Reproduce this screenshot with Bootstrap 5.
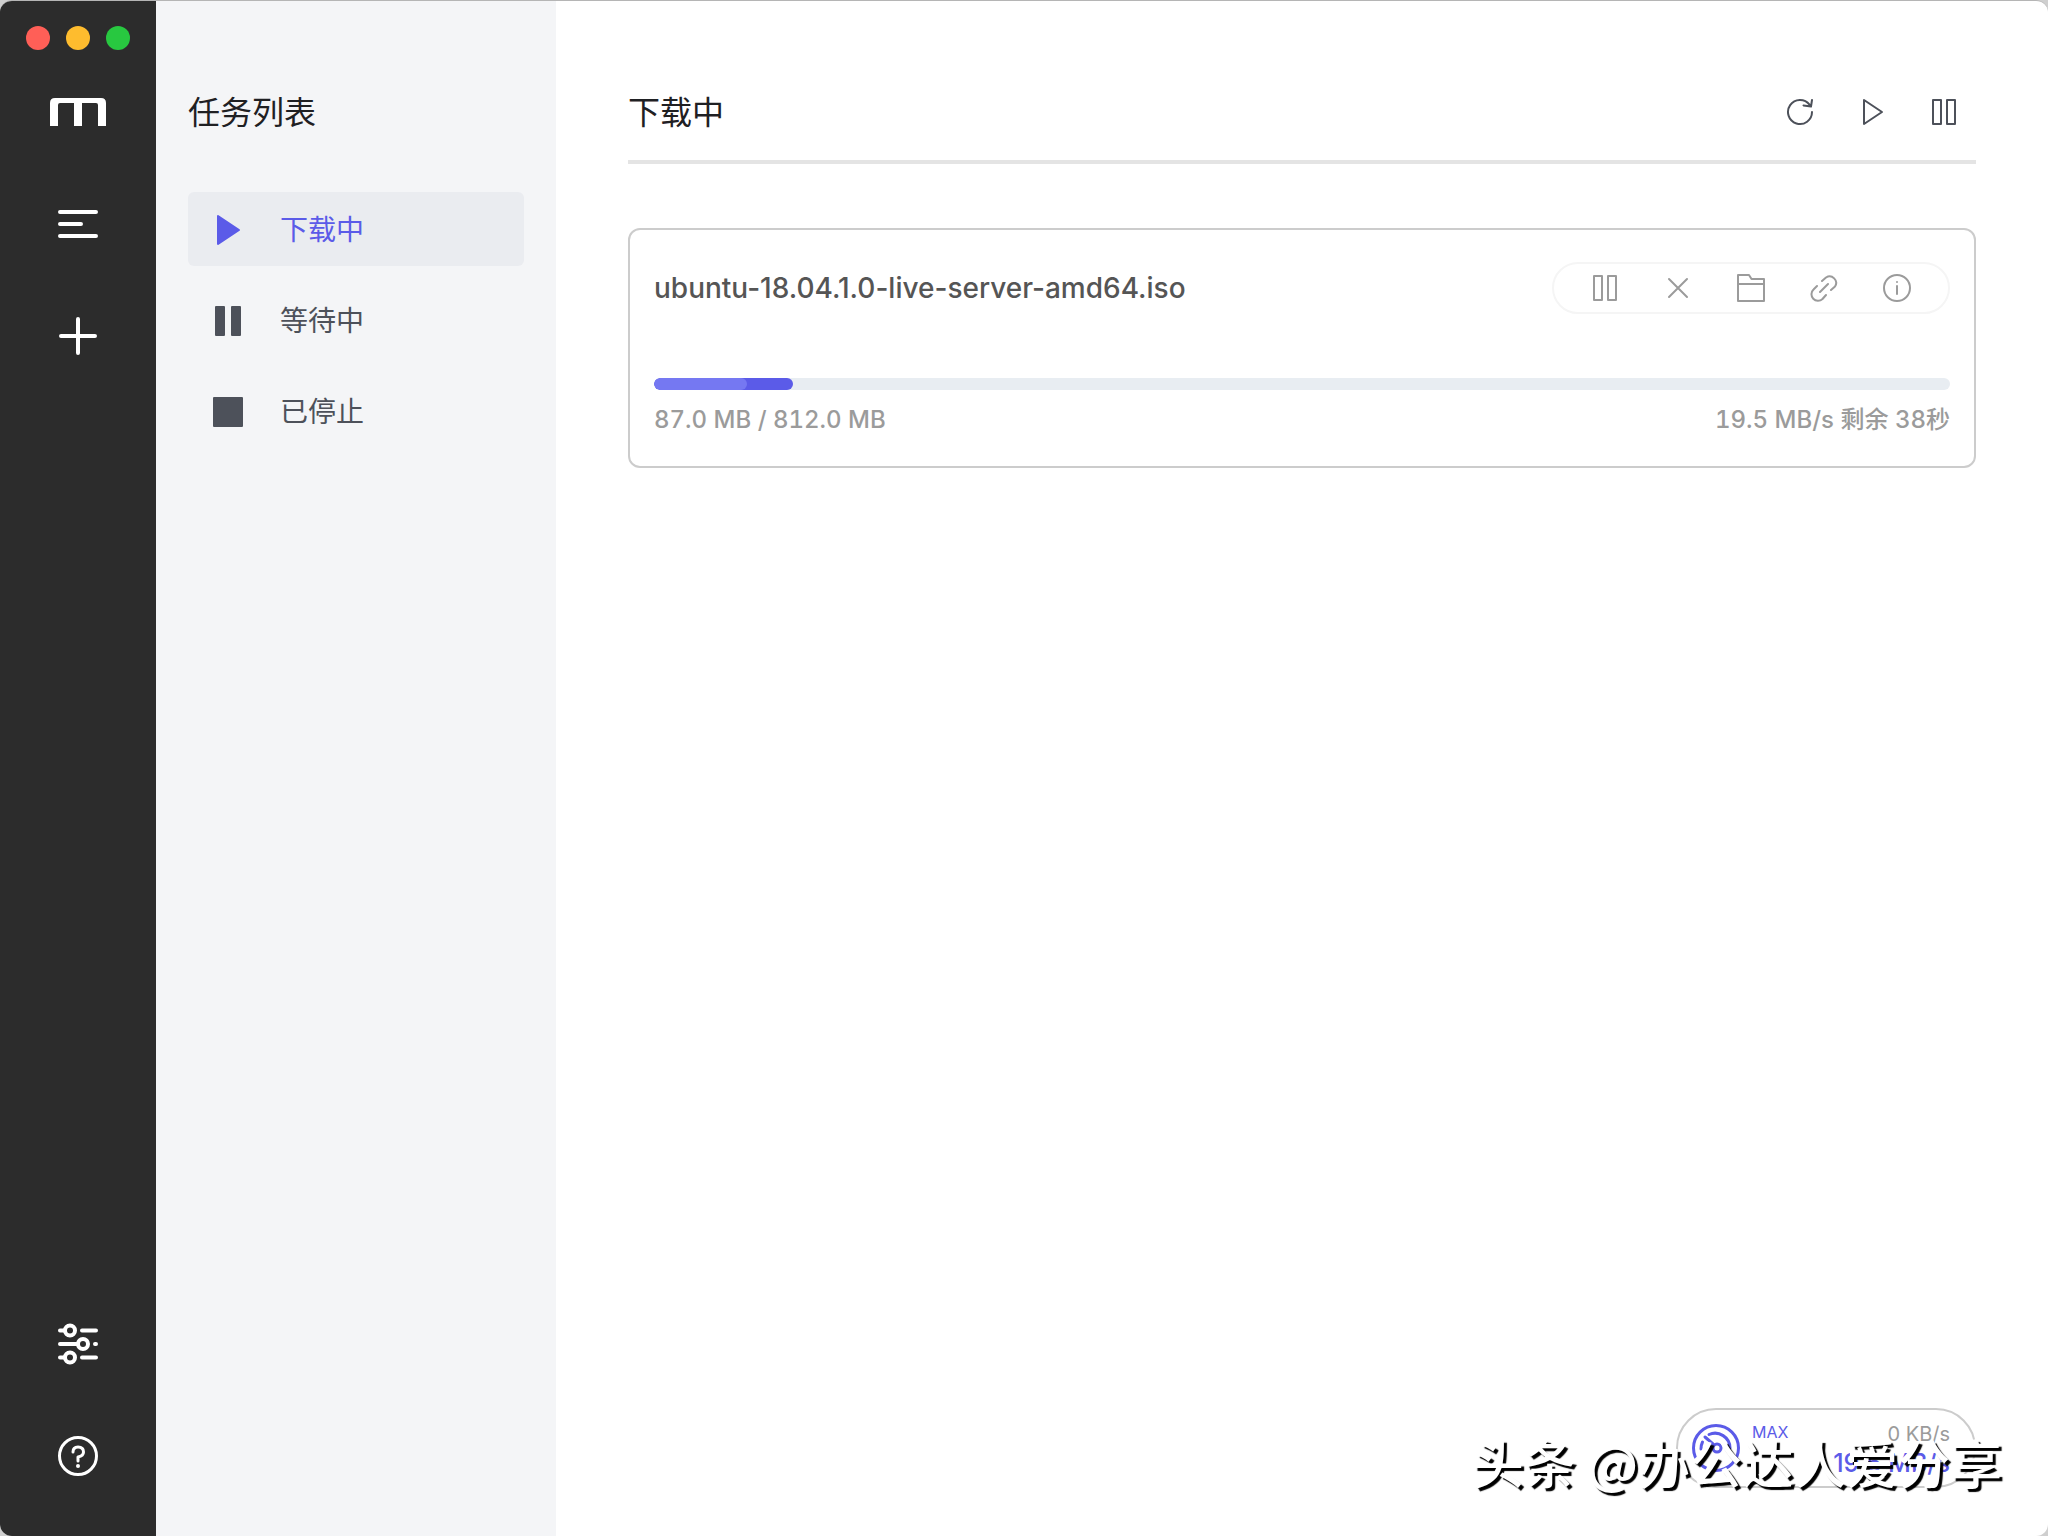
<!DOCTYPE html>
<html lang="zh-CN">
<head>
<meta charset="utf-8">
<meta name="viewport" content="width=device-width, initial-scale=1">
<title>Motrix</title>
<link href="https://cdn.jsdelivr.net/npm/bootstrap@5.3.0/dist/css/bootstrap.min.css" rel="stylesheet">
<style>
  body { background: #cfcfcf; font-family: Inter, "Noto Sans CJK SC", sans-serif; color: #4d515a; }
  svg { display: block; fill: none; stroke: currentColor; stroke-linecap: round; stroke-linejoin: round; }
  .app-window { border-radius: 12px; background: #fff; border-top: 1px solid #b5b5b5; }
  .rail { width: 156px; background: #2c2c2c; color: #fff; padding: 25px 0 56px; }
  .dot { width: 24px; height: 24px; }
  .rail .icon-btn svg { width: 48px; height: 48px; stroke-width: 4px; }
  .rail .icon-btn .thin { stroke-width: 3px; }
  .icon-btn { padding: 0; border: 0; background: none; color: inherit; line-height: 0; }
  .rail-top { gap: 64px; margin-top: 38px; }
  .rail-main { gap: 64px; }
  .subnav { width: 400px; background: #f4f5f7; padding: 88px 32px 0; }
  .heading { font-size: 32px; line-height: 48px; color: #1f2023; margin: 0; }
  .task-nav { margin-top: 55px; gap: 17px; }
  .task-nav .nav-link { height: 74px; padding: 2px 24px 0; gap: 36px; border-radius: 6px; font-size: 28px; color: #4d515a; }
  .task-nav .nav-link.active { background: #eaecf0; color: #5b5be8; }
  .task-nav svg { width: 32px; height: 32px; fill: currentColor; stroke-width: 2px; }
  .content { padding: 88px 72px 48px; }
  .panel-head { padding-bottom: 23px; border-bottom: 4px solid #e4e4e4; }
  .panel-actions { gap: 44px; padding: 0 18px 2px 0; }
  .panel-actions svg, .task-actions svg { width: 28px; height: 28px; stroke-width: 2px; }
  .task { margin-top: 64px; border: 2px solid #ccc; border-radius: 12px; padding: 32px 24px 28px; }
  .task-name { font-size: 28px; font-weight: 500; line-height: 52px; color: #555; }
  .task-actions { height: 52px; width: 398px; border: 2px solid #f5f5f5; border-radius: 26px; color: #9b9b9b; gap: 45px; }
  .task .progress { height: 12px; margin-top: 64px; border-radius: 6px; background: #e8edf2; }
  .task .progress-bar { background: #5b5be8; border-radius: 6px; }
  .shine { width: 67%; height: 12px; border-radius: 6px; background: #7578f2; }
  .task-info { font-size: 24px; font-weight: 500; font-variant-numeric: tabular-nums; line-height: 36px; margin-top: 12px; color: #9b9b9b; }
  .speed { width: 300px; height: 80px; border: 2px solid #ccc; border-radius: 40px; padding: 0 24px 0 14px; background: #fff; color: #5b5be8; }
  .speed svg { width: 48px; height: 48px; stroke-width: 3px; }
  .rates { padding: 5px 0 0 12px; }
  .limit { font-size: 16px; line-height: 20px; }
  .up { font-size: 20px; line-height: 24px; color: #9b9b9b; }
  .down { font-size: 25px; font-weight: 500; line-height: 34px; }
  .watermark { right: 46px; bottom: 35px; font: 500 52px/78px "Noto Sans CJK SC", sans-serif; color: #fff; text-shadow: 3px 3px 1px #000; white-space: nowrap; }
</style>
<script src="https://cdn.jsdelivr.net/npm/bootstrap@5.3.0/dist/js/bootstrap.bundle.min.js" defer></script>
</head>
<body>
<div class="app-window d-flex vh-100 overflow-hidden position-relative">
  <aside class="rail d-flex flex-column align-items-center flex-shrink-0">
    <div class="d-flex gap-3">
      <span class="dot rounded-circle" style="background:#ff5f57"></span>
      <span class="dot rounded-circle" style="background:#febc2e"></span>
      <span class="dot rounded-circle" style="background:#28c840"></span>
    </div>
    <div class="rail-top d-flex flex-column align-items-center">
      <svg width="56" height="48" viewBox="0 0 56 48" aria-label="Motrix"><path d="M0 38V15Q0 10 5 10H51Q56 10 56 15V38H48V17Q48 15 46 15H32V38H24V15H10Q8 15 8 17V38Z" fill="#fff" stroke="none"/></svg>
      <div class="rail-main d-flex flex-column">
        <button class="icon-btn" aria-label="任务列表"><svg viewBox="0 0 48 48"><path d="M6 12H42M6 24H27M6 36H42"/></svg></button>
        <button class="icon-btn" aria-label="新建任务"><svg viewBox="0 0 48 48"><path d="M7 24H41M24 7V41"/></svg></button>
      </div>
    </div>
    <div class="rail-main d-flex flex-column mt-auto">
      <button class="icon-btn" aria-label="设置"><svg viewBox="0 0 48 48"><path d="M6 10.500H10M28 10.500H42M6 24H23M41 24H42M6 37.500H10M28 37.500H42"/><circle cx="16" cy="10.500" r="5"/><circle cx="29" cy="24" r="5"/><circle cx="16" cy="37.500" r="5"/></svg></button>
      <button class="icon-btn" aria-label="帮助"><svg class="thin" viewBox="0 0 48 48"><circle cx="24" cy="24" r="18.500"/><path d="M19 20Q19 15 24 15Q29.500 15 29.500 20Q29.500 24 24 25V29"/><path d="M24 34V34.100" stroke-width="4"/></svg></button>
    </div>
  </aside>

  <nav class="subnav flex-shrink-0">
    <h1 class="heading fw-normal">任务列表</h1>
    <div class="task-nav nav flex-column">
      <a class="nav-link active d-flex align-items-center" href="#"><svg viewBox="0 0 32 32"><path d="M6 2L27 16L6 30Z"/></svg>下载中</a>
      <a class="nav-link d-flex align-items-center" href="#"><svg viewBox="0 0 32 32"><path d="M4 2H12V30H4ZM20 2H28V30H20Z"/></svg>等待中</a>
      <a class="nav-link d-flex align-items-center" href="#"><svg viewBox="0 0 32 32"><path d="M2 2H30V30H2Z"/></svg>已停止</a>
    </div>
  </nav>

  <main class="content d-flex flex-column flex-grow-1">
    <header class="panel-head d-flex align-items-center justify-content-between">
      <h2 class="heading fw-normal">下载中</h2>
      <div class="panel-actions d-flex">
        <button class="icon-btn" aria-label="刷新"><svg viewBox="0 0 28 28"><path d="M26 14A12 12 0 1 1 23.500 6.700M26 2L25 8.500L17.500 7.500"/></svg></button>
        <button class="icon-btn" aria-label="全部开始"><svg viewBox="0 0 28 28"><path d="M6 2L24 14L6 26Z"/></svg></button>
        <button class="icon-btn" aria-label="全部暂停"><svg viewBox="0 0 28 28"><path d="M3 2H11V26H3ZM17 2H25V26H17Z"/></svg></button>
      </div>
    </header>

    <article class="task">
      <div class="d-flex justify-content-between">
        <div class="task-name">ubuntu-18.04.1.0-live-server-amd64.iso</div>
        <div class="task-actions d-flex align-items-center justify-content-center">
          <button class="icon-btn" aria-label="暂停"><svg viewBox="0 0 28 28"><path d="M3 2H11V26H3ZM17 2H25V26H17Z"/></svg></button>
          <button class="icon-btn" aria-label="删除"><svg viewBox="0 0 28 28"><path d="M5 5L23 23M23 5L5 23"/></svg></button>
          <button class="icon-btn" aria-label="打开文件夹"><svg viewBox="0 0 28 28"><path d="M1 1H12L14.500 5H27V27H1ZM1 10H27"/></svg></button>
          <button class="icon-btn" aria-label="复制链接"><svg viewBox="0 0 28 28"><path d="M10 18L18 10M12 7L16 3.500A6.500 6.500 0 0 1 25 12.500L21 16M7 12L3.500 15.500A6.500 6.500 0 0 0 12.500 25L16 21"/></svg></button>
          <button class="icon-btn" aria-label="详情"><svg viewBox="0 0 28 28"><circle cx="14" cy="14" r="13"/><path d="M14 12V20M14 8V8.100"/></svg></button>
        </div>
      </div>
      <div class="progress" role="progressbar" aria-label="下载进度" aria-valuenow="11" aria-valuemin="0" aria-valuemax="100">
        <div class="progress-bar" style="width:10.7%"><div class="shine"></div></div>
      </div>
      <div class="task-info d-flex justify-content-between"><span>87.0 MB / 812.0 MB</span><span>19.5 MB/s 剩余 38秒</span></div>
    </article>

    <div class="speed d-flex align-items-center mt-auto ms-auto">
      <svg viewBox="0 0 48 48"><circle cx="24" cy="24" r="22.500"/><path d="M9 25Q9 21 10.500 18M17 10.500A15 15 0 0 1 38 24M13 13L21 20"/><circle cx="25" cy="24" r="4"/></svg>
      <div class="rates flex-grow-1 d-flex justify-content-between">
        <span class="limit">MAX</span>
        <div class="d-flex flex-column text-end"><span class="up">0 KB/s</span><span class="down">19.5 MB/s</span></div>
      </div>
    </div>
  </main>
  <div class="watermark position-absolute">头条 @办公达人爱分享</div>
</div>
</body>
</html>
